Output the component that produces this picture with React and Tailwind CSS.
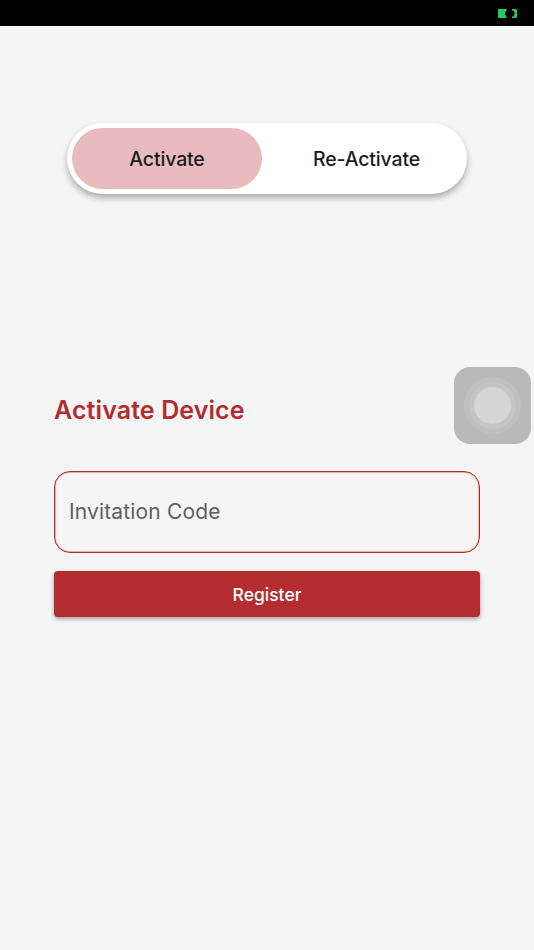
export default function App() {
  return (
    <div className="relative flex h-[950px] w-[534px] flex-col overflow-hidden bg-[#f5f5f5] font-['Inter','Liberation_Sans',sans-serif]">
      <div className="flex h-[26px] shrink-0 items-center justify-end bg-black pr-[17px]">
        <svg width="19" height="9" viewBox="0 0 19 9" aria-hidden="true">
          <path d="M0 0H9L6.8 4.5L9 9H0Z" fill="#22cc5e" />
          <path d="M14 0H17.5Q19 0 19 1.5V7.5Q19 9 17.5 9H14V7.6Q16.6 7.6 16.6 4.5Q16.6 1.4 14 1.4Z" fill="#22cc5e" />
        </svg>
      </div>

      <div className="mt-[97px] flex justify-center">
        <div className="flex h-[71px] w-[400px] items-center rounded-full bg-white p-[5px] shadow-[0_4px_6px_rgba(0,0,0,0.3)]">
          <div className="flex h-[61px] w-[190px] items-center justify-center rounded-full bg-[#e8bcbe] pt-[2px] text-[19.5px] font-medium tracking-[-0.15px] text-[#1c1b1f]">
            Activate
          </div>
          <div className="flex h-[61px] flex-1 items-center justify-center pt-[2px] pl-[9px] text-[19.5px] font-medium tracking-[-0.15px] text-[#1c1b1f]">
            Re-Activate
          </div>
        </div>
      </div>

      <div className="mt-[199px] flex flex-col px-[54px]">
        <h1 className="text-[25px] leading-[34px] font-semibold tracking-[0.1px] text-[#b32d30]">Activate Device</h1>
        <div className="mt-[44px] flex h-[82px] items-center rounded-[16px] border border-[#b32d30] pl-[14px] text-[21px] tracking-[0.15px] text-[#5f5f5f] shadow-[inset_0_0_0_1px_rgba(179,45,48,0.35)]">
          Invitation Code
        </div>
        <button className="mt-[18px] h-[46px] rounded-[4px] bg-[#b32d30] pt-[2px] text-[17.5px] font-medium text-white shadow-[0_2px_4px_rgba(0,0,0,0.35)]">
          Register
        </button>
      </div>

      <div className="absolute top-[367px] left-[454px] flex h-[77px] w-[77px] items-center justify-center rounded-[16px] bg-[#b9b9b9]">
        <div className="flex h-[57px] w-[57px] items-center justify-center rounded-full bg-[#bfbfbf]">
          <div className="flex h-[47px] w-[47px] items-center justify-center rounded-full bg-[#c5c5c5]">
            <div className="h-[37px] w-[37px] rounded-full bg-[#d6d6d6]" />
          </div>
        </div>
      </div>
    </div>
  );
}
